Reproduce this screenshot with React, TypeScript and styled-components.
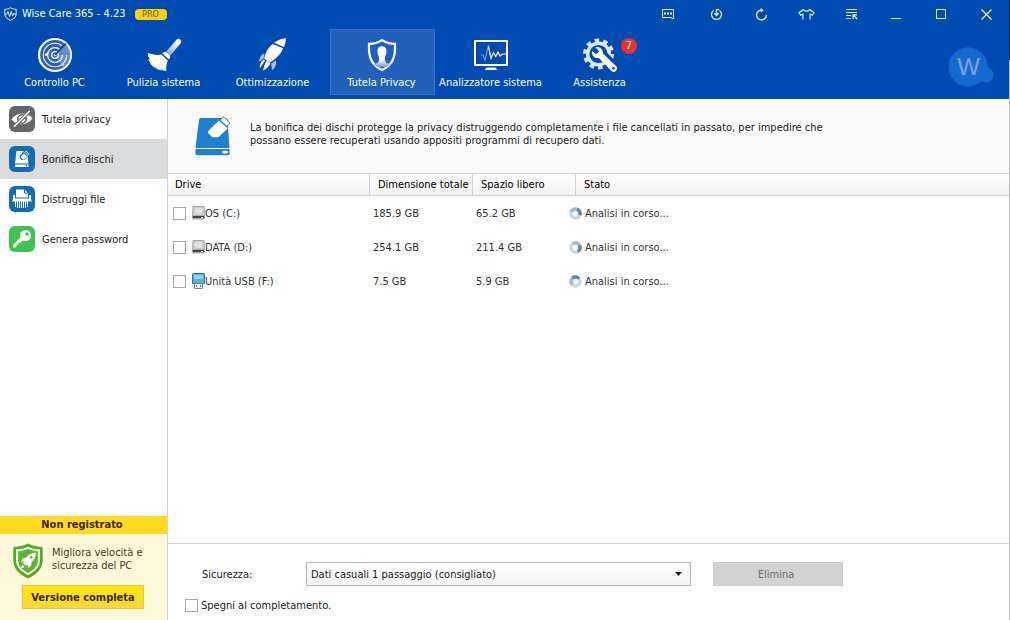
import React from 'react';
import styled, { createGlobalStyle } from 'styled-components';

const Global = createGlobalStyle`
  *, *::before, *::after { box-sizing: border-box; }
  body { margin: 0; background: #fff; }
  body, button, select, input {
    font-family: "DejaVu Sans Condensed", "DejaVu Sans", sans-serif;
    font-stretch: condensed;
    font-size: 11px;
    line-height: 13px;
    color: #1c1c1c;
  }
  svg { display: block; flex: none; }
`;

const Frame = styled.div`
  display: flex;
  min-height: 100vh;
`;
const Edge = styled.div`
  width: 1px;
  background: linear-gradient(#141c3c 60px, #b9bcc0 60px);
`;
const Window = styled.div`
  flex: 1;
  min-width: 0;
  display: flex;
  flex-direction: column;
`;
const Header = styled.header`
  background: #004bb1;
  color: #fff;
  height: 99px;
  flex: none;
`;
const TitleBar = styled.div`
  display: flex;
  align-items: center;
  height: 28px;
  padding-left: 4px;
`;
const Title = styled.h1`
  margin: 0 9px 0 5px;
  font-size: 11px;
  line-height: 16px;
  font-weight: normal;
  white-space: nowrap;
`;
const ProTag = styled.span`
  width: 32px;
  border-radius: 4px;
  background: #f6d215;
  color: #7a5200;
  font-size: 9px;
  line-height: 11px;
  text-align: center;
`;
const WindowButtons = styled.div`
  display: flex;
  margin-left: auto;
`;
const WindowButton = styled.button<{ $wide?: boolean }>`
  display: grid;
  place-items: center;
  width: ${p => (p.$wide ? 52 : 45)}px;
  height: 28px;
  padding: 0;
  border: 0;
  background: none;
  color: #e4fbff;
`;
const HeaderBody = styled.div`
  display: flex;
  align-items: center;
  justify-content: space-between;
  padding: 1px 15px 0 3px;
`;
const Nav = styled.nav`
  display: flex;
  gap: 4px;
`;
const NavItem = styled.button<{ $active?: boolean }>`
  position: relative;
  display: flex;
  flex-direction: column;
  align-items: center;
  width: 105px;
  height: 66px;
  padding: 7px 2px 0 0;
  border: 1px solid ${p => (p.$active ? '#3a72c6' : 'transparent')};
  background: ${p => (p.$active ? '#2161bb' : 'none')};
  color: #fff;
  white-space: nowrap;
`;
const NavLabel = styled.span`
  margin-top: 3px;
  line-height: 14px;
`;
const Count = styled.span`
  position: absolute;
  top: 8px;
  right: 15px;
  width: 16px;
  height: 16px;
  border-radius: 50%;
  background: #e83030;
  line-height: 16px;
`;
const Avatar = styled.button`
  width: 45px;
  height: 40px;
  margin-top: 10px;
  padding: 0 6px 0 0;
  border: 0;
  background: radial-gradient(circle at 19px 20px, #176acd 19px, transparent 20px),
    radial-gradient(circle at 37px 28px, #176acd 7px, transparent 8px);
  color: #7ea5e2;
  font: 24px/40px "Liberation Sans", Arial, sans-serif;
`;
const Body = styled.div`
  flex: 1;
  display: flex;
`;
const Sidebar = styled.aside`
  display: flex;
  flex-direction: column;
  justify-content: space-between;
  width: 168px;
  flex: none;
  border-right: 1px solid #d3d3d3;
`;
const SideItem = styled.button<{ $active?: boolean }>`
  display: flex;
  align-items: center;
  gap: 7px;
  width: 100%;
  height: 40px;
  padding: 0 0 0 9px;
  border: 0;
  background: ${p => (p.$active ? '#d9dbdc' : 'none')};
`;
const Promo = styled.section`
  display: flex;
  flex-direction: column;
  background: #fff9db;
`;
const PromoTitle = styled.h2`
  margin: 0;
  background: #ffdb20;
  color: #3c2400;
  font-size: 11px;
  line-height: 18px;
  padding-right: 3px;
  text-align: center;
`;
const PromoRow = styled.div`
  display: flex;
  gap: 9px;
  padding: 9px 0 0 13px;
`;
const PromoText = styled.p`
  margin: 3px 0 0;
  color: #4d3a1c;
  white-space: nowrap;
`;
const BuyButton = styled.button`
  width: 122px;
  height: 24px;
  margin: 6px 0 11px 22px;
  padding: 0;
  border: 1px solid #e6c94a;
  background: linear-gradient(#ffe60b, #fdd732);
  color: #3c2400;
  font-weight: bold;
  white-space: nowrap;
`;
const Main = styled.main`
  flex: 1;
  min-width: 0;
  display: flex;
  flex-direction: column;
`;
const Intro = styled.section`
  display: flex;
  gap: 20px;
  height: 74px;
  padding: 17px 20px 0 27px;
  background: #fafafa;
`;
const IntroText = styled.p`
  max-width: 590px;
  margin: 5px 0 0;
`;
const DriveTable = styled.table`
  width: 100%;
  table-layout: fixed;
  border-collapse: separate;
  border-spacing: 0;
`;
const Col = styled.col<{ $w?: number }>`
  ${p => (p.$w ? `width: ${p.$w}px;` : '')}
`;
const HeadCell = styled.th<{ $inset?: boolean }>`
  height: 23px;
  padding: 0 0 0 ${p => (p.$inset ? 8 : 0)}px;
  border: solid #d4d4d4;
  border-width: 1px 0;
  background: linear-gradient(#fff, #f3f3f3);
  color: #000;
  font-weight: normal;
  text-align: left;
  white-space: nowrap;
`;
const HeadText = styled.span<{ $rule?: boolean }>`
  display: block;
  padding-left: ${p => (p.$rule ? 8 : 7)}px;
  border-left: ${p => (p.$rule ? '1px solid #d4d4d4' : '0')};
  line-height: 21px;
`;
const Cell = styled.td`
  height: 34px;
  padding: 0 0 0 4px;
  color: #333;
  white-space: nowrap;
`;
const DriveLabel = styled.label`
  display: flex;
  align-items: center;
  padding-left: 1px;
`;
const Check = styled.input`
  appearance: none;
  flex: none;
  width: 13px;
  height: 13px;
  margin: 0;
  border: 1px solid #a9a9a9;
  background: #fff;
`;
const DriveIcon = styled.span`
  margin-left: 6px;
`;
const Status = styled.span`
  display: flex;
  align-items: center;
  gap: 3px;
  margin-left: -2px;
`;
const Footer = styled.footer`
  margin-top: auto;
  padding: 18px 20px 8px 17px;
  border-top: 1px solid #d4d4d4;
`;
const ActionRow = styled.div`
  display: flex;
  align-items: center;
  height: 24px;
  padding-left: 17px;
`;
const FieldLabel = styled.label`
  width: 104px;
  flex: none;
`;
const SelectBox = styled.div`
  position: relative;
  flex: 0 1 385px;
`;
const Select = styled.select`
  appearance: none;
  display: block;
  width: 100%;
  height: 24px;
  padding: 0 24px 0 4px;
  border: 1px solid #b9b9b9;
  border-radius: 0;
  background: linear-gradient(#fff, #f2f2f2);
`;
const Arrow = styled.svg`
  position: absolute;
  right: 9px;
  top: 10px;
  pointer-events: none;
`;
const DeleteButton = styled.button`
  width: 130px;
  height: 24px;
  margin-left: 22px;
  padding: 0 4px 0 0;
  border: 1px solid #cbcbcb;
  background: #d2d2d2;
  color: #6d6d6d;
`;
const ShutdownLabel = styled.label`
  display: flex;
  align-items: center;
  gap: 3px;
  width: max-content;
  margin-top: 13px;
`;

/* ---- title bar icons ---- */
const LogoIcon = () => (
  <svg width="13" height="14" viewBox="0 0 13 14" fill="none" stroke="#e4f2ff">
    <path d="M6.5.7C4.800 1.900 2.800 2.300.8 2.300v4.500c0 3.300 2.500 5.200 5.700 6.500 3.200-1.300 5.700-3.200 5.700-6.500V2.300c-2 0-4-.4-5.700-1.600z" />
    <path d="M1 7.200h1.700L4 4.500l1.600 5L7.200 4.500l1.400 4.600 1.200-3 .6 1.100H12" />
  </svg>
);
const ChatIcon = () => (
  <svg width="14" height="12" viewBox="0 0 14 12" fill="none" stroke="currentColor">
    <path d="M1.500 1.500h11v9.500l-3-1.500h-8z" />
    <path d="M3 5.500h2M6 5.500h2M9 5.500h2" strokeWidth="2" />
  </svg>
);
const UpdateIcon = () => (
  <svg width="13" height="13" viewBox="0 0 13 13" fill="none" stroke="currentColor">
    <path d="M3.600 2.400a5 5 0 1 0 5.800 0" strokeWidth="1.200" />
    <path d="M6.500 1v6M4.300 5.200l2.200 2.200 2.200-2.200" strokeWidth="1.300" />
    <path d="M6.500 1.500h2.700" />
  </svg>
);
const RefreshIcon = () => (
  <svg width="13" height="13" viewBox="0 0 13 13" fill="none" stroke="currentColor" strokeWidth="1.300">
    <path d="M7 2.200A4.900 4.900 0 1 0 11.400 7" />
    <path d="M5.700 0l3 2.300-3 2.300z" fill="currentColor" stroke="none" />
  </svg>
);
const ShirtIcon = () => (
  <svg width="17" height="13" viewBox="0 0 17 13" fill="none" stroke="currentColor" strokeWidth="1.100">
    <path d="M5.500 1.500L1 4.700l1.700 2.500 2.200-1.100V11.500M11.500 1.500L16 4.700l-1.700 2.500-2.200-1.100V11.500M5.500 1.500c1 2.200 5 2.200 6 0" />
  </svg>
);
const MenuIcon = () => (
  <svg width="13" height="12" viewBox="0 0 13 12" fill="none" stroke="currentColor" strokeWidth="1.200">
    <path d="M1 1.500h11M1 4.500h11M1 7.500h5M1 10.500h5M8 11V6.800h4M8.300 7l3.900 4" />
  </svg>
);
const MinimizeIcon = () => (
  <svg width="11" height="13" viewBox="0 0 11 13" stroke="currentColor"><path d="M0 10.500h10" /></svg>
);
const MaximizeIcon = () => (
  <svg width="11" height="11" viewBox="0 0 11 11" fill="none" stroke="currentColor"><path d="M.5.5h9v9H.5z" /></svg>
);
const CloseIcon = () => (
  <svg width="11" height="11" viewBox="0 0 11 11" stroke="currentColor" strokeWidth="1.200"><path d="M.5.5l10 10M10.500.5l-10 10" /></svg>
);

/* ---- navigation icons ---- */
const RadarIcon = () => (
  <svg width="36" height="36" viewBox="0 0 36 36" fill="none" stroke="#fff">
    <circle cx="18" cy="18" r="16" fill="#2c62bd" strokeWidth="2.200" />
    <path d="M18 18L29 6.500A16 16 0 0 1 27 31z" fill="#8eabe2" fillOpacity=".55" stroke="none" />
    <circle cx="18" cy="18" r="11.700" strokeWidth="1.100" strokeDasharray="62 12" />
    <circle cx="18" cy="18" r="7.400" strokeWidth="1.300" strokeDasharray="40 7" />
    <circle cx="18" cy="18" r="3.300" strokeWidth="1.300" />
    <circle cx="18" cy="18" r="1.200" fill="#fff" stroke="none" />
    <path d="M18 18L29 6.500" stroke="#0b3f94" strokeWidth="1.600" />
    <circle cx="9.500" cy="17.500" r="1.600" fill="#fff" stroke="none" />
    <circle cx="25.500" cy="27.500" r="1.700" fill="#b8caef" stroke="none" />
  </svg>
);
const BroomIcon = () => (
  <svg width="36" height="36" viewBox="0 0 36 36">
    <defs>
      <linearGradient id="handle" x1="1" y1="0" x2="0" y2="1">
        <stop offset=".2" stopColor="#fff" /><stop offset="1" stopColor="#6791d8" />
      </linearGradient>
    </defs>
    <path d="M30.500 2.800a2.600 2.600 0 0 1 4 3.600L23.700 19.300l-4.400-3.900z" fill="url(#handle)" />
    <path d="M17.200 15.500c1-1 2.400-.8 3.500.2l2.600 2.400c1.100 1 1.200 2.400.4 3.300l-1 .9-6.500-5.800z" fill="#fff" />
    <path d="M15.300 17.500l6.600 5.900c-1.500 3.400-2 6.800-1.500 10.600l-3.200-.4-1.800-2.200.3 2.200-4.500-1.400-1.900-2.500.2 1.700c-3.700-2.300-6.200-5.600-7.200-9.500l2 .7-2-2.900c-.4-1.300-.6-2.500-.4-3.800 5.200 1.500 9.400 2.700 13.400 1.600z" fill="#fff" />
  </svg>
);
const RocketShape = () => (
  <>
    <path d="M20 5.800C23 3.300 27 1.700 32 1.200c-.2 3.600-1 6.300-2.200 8.800z" />
    <path d="M18.800 6.900l10.400 4.400c-2.900 6.200-7.200 11-13.700 14.300l-5.300-3.800C11 15.600 14 10.500 18.800 6.900z" />
    <path d="M10.500 16.600c-3 .7-5 3.300-5.300 8.500l4.400-3.500zM21.800 23.300c1.200 3.600-.1 6.900-3.600 10l-1.200-6.600z" opacity=".65" />
    <path d="M9.500 22.600l1.500 1.100L5.800 31.500c-.3-3.500.8-6.500 3.700-8.900zM12.600 23.800l4 2.400c-2 3.900-4.500 5.900-7.600 7.500.7-3.700 1.700-6.700 3.600-9.900z" />
  </>
);
const RocketIcon = () => (
  <svg width="36" height="36" viewBox="1 0 36 36" fill="#fff"><RocketShape /></svg>
);
const ShieldIcon = () => (
  <svg width="36" height="36" viewBox="0 0 36 36">
    <defs>
      <linearGradient id="person" x1="0" y1="0" x2="0" y2="1">
        <stop offset=".65" stopColor="#fff" /><stop offset="1" stopColor="#6d95d9" />
      </linearGradient>
    </defs>
    <path d="M18 3.200c-4 2.600-8.500 3.700-13 3.700-.6 11.800 1.700 21 13 26.100 11.300-5.100 13.600-14.300 13-26.100-4.500 0-9-1.100-13-3.700z" fill="none" stroke="#fff" strokeWidth="2.200" />
    <path d="M18 9.200c-3 0-4.700 2.200-4.500 5.200.1 2.600 1 4.600 1.500 5.900.2 3.200-.2 4.500-1.500 5.600l-4.500 1.500c2.300 1.700 5.500 2.500 9 2.700 3.500-.2 6.700-1 9-2.700l-4.500-1.500c-1.300-1.100-1.700-2.400-1.500-5.600.5-1.300 1.400-3.300 1.500-5.900.2-3-1.500-5.200-4.500-5.200z" fill="url(#person)" />
  </svg>
);
const MonitorIcon = () => (
  <svg width="36" height="36" viewBox="0 0 36 36" fill="none" stroke="#fff">
    <path d="M2 4h32v24H2z" strokeWidth="2" strokeLinejoin="round" />
    <path d="M8 18h2l2 5 3.500-14.500 2 10" stroke="#75a1e8" strokeWidth="1.100" />
    <path d="M15.400 9.500l2.600 12 2.500-6 2.200 4 2.300-4.500 2 4 2.300-2H33" strokeWidth="1.100" />
    <path d="M13.500 31h9l1 1.500h-11z" fill="#fff" strokeWidth="1" />
  </svg>
);
const GearIcon = () => (
  <svg width="36" height="36" viewBox="0 0 36 36">
    <g fill="none" stroke="#dce7fa">
      <circle cx="16.500" cy="17" r="10.800" strokeWidth="3.500" />
      <circle cx="16.500" cy="17" r="13.500" strokeWidth="4" strokeDasharray="4.500 3.980" />
    </g>
    <path d="M18.500 15.800l5-1.500 11 11-4 8.500-6-4.500z" fill="#004bb1" />
    <path d="M13.500 10.200c3.700-1 7.800 1.600 7.500 6.400l13 12.300a3.400 3.400 0 0 1-4.800 4.900L16.900 21c-4.200.6-7.700-2.500-6.900-7l4.200 3.300 3-2.700z" fill="#fff" />
    <circle cx="31.500" cy="31.200" r="1.300" fill="#004bb1" />
  </svg>
);

/* ---- sidebar icons ---- */
const EyeIcon = () => (
  <svg width="26" height="26" viewBox="0 0 26 26">
    <rect width="26" height="26" rx="6" fill="#666" />
    <path d="M2.500 13.500C7.500 5.700 18.500 5.700 23.500 12.500 18.500 19.700 7.500 20.300 2.500 13.500z" fill="#fff" />
    <circle cx="13" cy="13" r="4.200" fill="none" stroke="#666" strokeWidth="1.600" />
    <path d="M5.500 20.500L20.500 5.500" stroke="#666" strokeWidth="3.500" />
    <path d="M5 20.800L20.800 5" stroke="#fff" strokeWidth="1.600" />
  </svg>
);
const EraseTileIcon = () => (
  <svg width="26" height="26" viewBox="0 0 26 26">
    <rect width="26" height="26" rx="6" fill="#146cb5" />
    <path d="M7.500 5h10.500l1.500 12.500H6z" fill="#fff" />
    <path d="M6 18.500h13.500V21H6z" fill="#fff" />
    <path d="M10.500 10.500l5-6.500 5.500 4.500-5.500 5.500h-3.500z" fill="#146cb5" />
    <path d="M11.700 10.700l3-3.300 3.800 3-3 3h-2.300z" fill="#fff" />
    <path d="M15.700 6.500l1.200-1.200 3.300 2.800-1.200 1.300z" fill="none" stroke="#fff" strokeWidth=".8" />
    <circle cx="17.500" cy="19.700" r=".8" fill="#146cb5" />
  </svg>
);
const ShredderIcon = () => (
  <svg width="26" height="26" viewBox="0 0 26 26">
    <rect width="26" height="26" rx="6" fill="#146cb5" />
    <path d="M7 3.500h8.500L19 7v4.500H7z" fill="#fff" />
    <path d="M15.500 3.500V7H19" fill="none" stroke="#146cb5" />
    <path d="M4 9h2v3.500h14V9h2v4l1 2.500H3L4 13z" fill="#fff" />
    <path d="M6.500 15v6M8.500 15v7M10.500 15v7M12.500 15v7M14.500 15v7M16.500 15v7M18.500 15v6" stroke="#fff" />
  </svg>
);
const KeyIcon = () => (
  <svg width="26" height="26" viewBox="0 0 26 26">
    <rect width="26" height="26" rx="6" fill="#3fc353" />
    <circle cx="16.500" cy="9.500" r="5.500" fill="#fff" />
    <circle cx="18" cy="8" r="1.700" fill="#3fc353" />
    <path d="M12 11L4 19v2.500h2.500l1-1v-1.800h2v-2h2L15.500 13z" fill="#fff" />
  </svg>
);

/* ---- content icons ---- */
const EraseIcon = () => (
  <svg width="35" height="40" viewBox="0 0 35 40">
    <path d="M6 2h24.500a2 2 0 0 1 2 2L34.500 32H.5L4 4a2 2 0 0 1 2-2z" fill="#2180ce" />
    <path d="M.5 33h34v4.500a1.800 1.800 0 0 1-1.800 1.800H2.300A1.800 1.800 0 0 1 .5 37.500z" fill="#2180ce" />
    <ellipse cx="30" cy="36" rx="3" ry="1.600" fill="#fff" />
    <path d="M13.500 17.500a2 2 0 0 1 0-2.800L24 4.500l8.700 8-8.200 7.700c-.8.700-1.500 1-2.500 1h-4.500z" fill="#fff" />
    <path d="M25 4l2.200-2.200a2 2 0 0 1 2.700 0l4 3.800a2 2 0 0 1 0 2.800L32 10.500z" fill="#fff" stroke="#2180ce" />
  </svg>
);
const DiskIcon = () => (
  <svg width="13" height="14" viewBox="0 0 13 14">
    <path d="M1 .5h11l.5 9.500H.5z" fill="#cfcfcf" stroke="#a6a6a6" />
    <ellipse cx="6.500" cy="5" rx="4" ry="3" fill="#e2e2e2" />
    <path d="M.5 10h12v2.500H.5z" fill="#444" />
    <path d="M0 9.500h13M0 13h13" stroke="#b0b0b0" />
    <path d="M9 11.500h2" stroke="#eee" />
  </svg>
);
const UsbIcon = () => (
  <svg width="13" height="16" viewBox="0 0 13 16">
    <path d="M.5 1.500a1 1 0 0 1 1-1h10a1 1 0 0 1 1 1v9h-12z" fill="#5aaed2" stroke="#26779f" />
    <path d="M2 2h9v4H2z" fill="#8fd0e8" />
    <path d="M2.500 10.500h8v5h-8z" fill="#edf3f6" stroke="#6c8797" />
    <path d="M4.500 12v2M8.500 12v2" stroke="#56707e" />
  </svg>
);
const SpinnerIcon = ({ angle }: { angle: number }) => (
  <svg width="13" height="13" viewBox="0 0 13 13" fill="none" strokeWidth="3.500">
    <g transform={`rotate(${angle} 6.500 6.500)`}>
      <circle cx="6.500" cy="6.500" r="4.500" stroke="#ccd8e2" />
      <path d="M2 6.500A4.500 4.500 0 0 1 6.500 2" stroke="#9ebbd3" />
      <path d="M6.500 2A4.500 4.500 0 0 1 11 6.500" stroke="#5389b5" />
    </g>
  </svg>
);
const BoostShield = () => (
  <svg width="30" height="36" viewBox="0 0 30 36">
    <path d="M15 .5C10.500 2.800 5.500 3.900.3 4v13C.3 26 6 31 15 35.500 24 31 29.700 26 29.700 17V4C24.500 3.900 19.500 2.800 15 .5z" fill="#4fae20" />
    <path d="M15 3.800c-3.600 1.700-7.400 2.600-11.900 2.800V17c0 7.300 4.500 11.200 11.900 15.100 7.400-3.900 11.900-7.800 11.900-15.100V6.600c-4.500-.2-8.300-1.100-11.900-2.800z" fill="#fff" />
    <path d="M15 5.800c-3.100 1.400-6.100 2.200-9.900 2.500V17c0 6.200 3.600 9.500 9.900 12.900 6.300-3.400 9.900-6.700 9.900-12.900V8.300c-3.800-.3-6.800-1.100-9.900-2.500z" fill="#5cb531" />
    <path d="M23 9.500c-4.500.2-7.500 1.800-9.700 5L10 15.200 7.800 18.800l3.200-.4-1 1.900 3.200 2.800 1.700-1-.1 3.200 3.400-2.600.3-3.300c2.800-2.500 4.300-5.500 4.500-9.900zM9.200 21.600l-1.700 4.300 4-1.900z" fill="#fff" />
    <circle cx="18.300" cy="14.400" r="1.300" fill="#5cb531" />
  </svg>
);

const windowButtons = [
  ['Feedback', ChatIcon], ['Aggiorna', UpdateIcon], ['Ricarica', RefreshIcon], ['Temi', ShirtIcon],
  ['Menu', MenuIcon], ['Riduci', MinimizeIcon], ['Ingrandisci', MaximizeIcon], ['Chiudi', CloseIcon],
] as const;
const navItems = [
  { label: 'Controllo PC', Icon: RadarIcon },
  { label: 'Pulizia sistema', Icon: BroomIcon },
  { label: 'Ottimizzazione', Icon: RocketIcon },
  { label: 'Tutela Privacy', Icon: ShieldIcon, active: true },
  { label: 'Analizzatore sistema', Icon: MonitorIcon },
  { label: 'Assistenza', Icon: GearIcon, count: 7 },
];
const sideItems = [
  { label: 'Tutela privacy', Icon: EyeIcon },
  { label: 'Bonifica dischi', Icon: EraseTileIcon, active: true },
  { label: 'Distruggi file', Icon: ShredderIcon },
  { label: 'Genera password', Icon: KeyIcon },
];
const drives = [
  { name: 'OS (C:)', total: '185.9 GB', free: '65.2 GB', Icon: DiskIcon, angle: 20 },
  { name: 'DATA (D:)', total: '254.1 GB', free: '211.4 GB', Icon: DiskIcon, angle: 60 },
  { name: 'Unità USB (F:)', total: '7.5 GB', free: '5.9 GB', Icon: UsbIcon, angle: -40 },
];

export default function App() {
  return (
    <Frame>
      <Global />
      <Window>
        <Header>
          <TitleBar>
            <LogoIcon />
            <Title>Wise Care 365 - 4.23</Title>
            <ProTag>PRO</ProTag>
            <WindowButtons>
              {windowButtons.map(([name, Icon], i) => (
                <WindowButton key={name} aria-label={name} $wide={i === 0}><Icon /></WindowButton>
              ))}
            </WindowButtons>
          </TitleBar>
          <HeaderBody>
            <Nav>
              {navItems.map(({ label, Icon, active, count }) => (
                <NavItem key={label} $active={active}>
                  <Icon />
                  <NavLabel>{label}</NavLabel>
                  {count && <Count>{count}</Count>}
                </NavItem>
              ))}
            </Nav>
            <Avatar>W</Avatar>
          </HeaderBody>
        </Header>
        <Body>
          <Sidebar>
            <nav>
              {sideItems.map(({ label, Icon, active }) => (
                <SideItem key={label} $active={active}><Icon />{label}</SideItem>
              ))}
            </nav>
            <Promo>
              <PromoTitle>Non registrato</PromoTitle>
              <PromoRow>
                <BoostShield />
                <PromoText>Migliora velocità e<br />sicurezza del PC</PromoText>
              </PromoRow>
              <BuyButton>Versione completa</BuyButton>
            </Promo>
          </Sidebar>
          <Main>
            <Intro>
              <EraseIcon />
              <IntroText>
                La bonifica dei dischi protegge la privacy distruggendo completamente i file cancellati in passato, per impedire che
                possano essere recuperati usando appositi programmi di recupero dati.
              </IntroText>
            </Intro>
            <DriveTable>
              <colgroup><Col $w={201} /><Col $w={103} /><Col $w={95} /><Col /></colgroup>
              <thead>
                <tr>
                  <HeadCell><HeadText>Drive</HeadText></HeadCell>
                  <HeadCell><HeadText $rule>Dimensione totale</HeadText></HeadCell>
                  <HeadCell><HeadText $rule>Spazio libero</HeadText></HeadCell>
                  <HeadCell $inset><HeadText $rule>Stato</HeadText></HeadCell>
                </tr>
              </thead>
              <tbody>
                {drives.map(({ name, total, free, Icon, angle }) => (
                  <tr key={name}>
                    <Cell>
                      <DriveLabel>
                        <Check type="checkbox" />
                        <DriveIcon><Icon /></DriveIcon>
                        {name}
                      </DriveLabel>
                    </Cell>
                    <Cell>{total}</Cell>
                    <Cell>{free}</Cell>
                    <Cell><Status><SpinnerIcon angle={angle} />Analisi in corso...</Status></Cell>
                  </tr>
                ))}
              </tbody>
            </DriveTable>
            <Footer>
              <ActionRow>
                <FieldLabel htmlFor="security">Sicurezza:</FieldLabel>
                <SelectBox>
                  <Select id="security">
                    <option>Dati casuali 1 passaggio (consigliato)</option>
                  </Select>
                  <Arrow width="7" height="4" viewBox="0 0 7 4"><path d="M0 0h7L3.500 4z" fill="#222" /></Arrow>
                </SelectBox>
                <DeleteButton disabled>Elimina</DeleteButton>
              </ActionRow>
              <ShutdownLabel><Check type="checkbox" />Spegni al completamento.</ShutdownLabel>
            </Footer>
          </Main>
        </Body>
      </Window>
      <Edge />
    </Frame>
  );
}
